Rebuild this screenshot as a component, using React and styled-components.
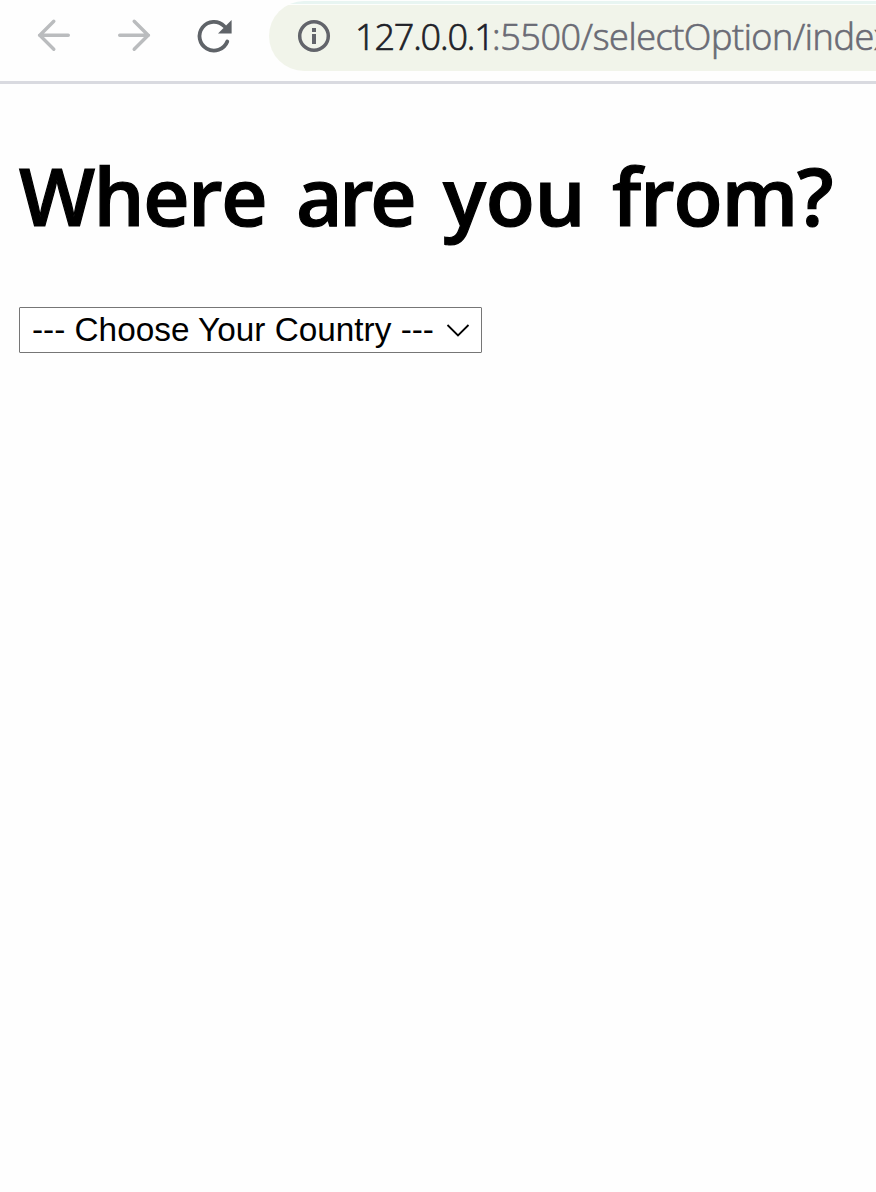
import React from "react";
import styled, { createGlobalStyle } from "styled-components";

const GlobalStyle = createGlobalStyle`
  html, body { margin: 0; background: #fefefe; overflow: hidden; }
  #root { height: 1192px; }
`;

const Toolbar = styled.header`
  display: flex;
  box-sizing: border-box;
  width: 876px;
  height: 84px;
  padding-top: 1px;
  border-bottom: 3px solid #d9dae0;
  overflow: hidden;
`;

const NavButtons = styled.nav`
  display: flex;
  flex: none;
  gap: 40px;
  padding: 15px 0 0 34px;
  width: 235px;
`;

const NavButton = styled.button`
  width: 40px;
  height: 40px;
  padding: 0;
  border: 0;
  background: none;
  color: ${(p) => (p.$active ? "#5f6368" : "#babcbe")};
  svg { display: block; }
`;

const AddressBar = styled.div`
  display: flex;
  flex: none;
  align-items: center;
  box-sizing: border-box;
  width: 700px;
  height: 70px;
  padding-left: 27px;
  border-radius: 35px 0 0 35px;
  background: linear-gradient(#e8f5f2 0 3px, #fdfefc 3px 4px, #f1f4ea 4px);
`;

const InfoIcon = styled.svg`
  flex: none;
  width: 36px;
  height: 36px;
  margin-right: 23px;
`;

const Url = styled.span`
  padding-top: 1px;
  font: 300 36px/50px "Open Sans", "Noto Sans", sans-serif;
  -webkit-text-stroke: 0.7px currentColor;
  color: #6a6b75;
  white-space: nowrap;
`;

const Host = styled.span`
  display: inline-block;
  width: 137px;
  color: #202128;
  letter-spacing: ${(p) => p.$tracking}px;
`;

const Path = styled.span`
  letter-spacing: ${(p) => p.$tracking}px;
`;

const Page = styled.main`
  padding: 56px 19px 0;
`;

const Heading = styled.h1`
  display: flex;
  margin: 0;
  height: 110px;
  font: 600 80.5px/110px "Open Sans", "Noto Sans", sans-serif;
  -webkit-text-stroke: ${(p) => p.$stroke}px currentColor;
  color: #000;
  white-space: pre;
`;

const Word = styled.span`
  flex: none;
  width: ${(p) => p.$width}px;
  letter-spacing: ${(p) => p.$tracking}px;
`;

const SelectBox = styled.div`
  display: flex;
  align-items: center;
  box-sizing: border-box;
  width: 463px;
  height: 46px;
  margin-top: 57px;
  padding-left: 12px;
  border: 1px solid #767676;
  border-radius: 1px;
  background: #fff;
  color: #000;
  font: 33.33px/38px "Liberation Sans", Arial, sans-serif;
  white-space: nowrap;
`;

const SelectLabel = styled.span`
  width: 414px;
`;

const words = [
  { text: "Where", width: 277, tracking: -1.5 },
  { text: "are", width: 147, tracking: -3.6 },
  { text: "you", width: 169, tracking: -0.3 },
  { text: "from?", width: 240, tracking: -1.2 },
];

export default function App() {
  return (
    <>
      <GlobalStyle />
      <Toolbar>
        <NavButtons>
          <NavButton aria-label="Back">
            <svg width="40" height="40" fill="none" stroke="currentColor" strokeWidth="3.4" strokeLinecap="round" strokeLinejoin="round">
              <path d="M34.3 19.3H5.5M19.8 5.3l-14 14 14 14" />
            </svg>
          </NavButton>
          <NavButton aria-label="Forward">
            <svg width="40" height="40" fill="none" stroke="currentColor" strokeWidth="3.4" strokeLinecap="round" strokeLinejoin="round">
              <path d="M5.7 19.3h28.8M20.2 5.3l14 14-14 14" />
            </svg>
          </NavButton>
          <NavButton $active aria-label="Reload">
            <svg width="40" height="40" fill="none" stroke="currentColor" strokeWidth="3.8" strokeLinecap="round">
              <path d="M33.3 25.5A14.4 14.4 0 1 1 30.3 10.2" />
              <path d="M37.6 4v13.5H24Z" fill="currentColor" stroke="none" />
            </svg>
          </NavButton>
        </NavButtons>
        <AddressBar>
          <InfoIcon viewBox="0 0 36 36">
            <circle cx="18" cy="18" r="14.3" fill="none" stroke="#62646a" strokeWidth="3.5" />
            <path d="M16 10h4v4h-4zM16 16h4v10h-4z" fill="#62646a" />
          </InfoIcon>
          <Url>
            <Host $tracking={-1.15}>127.0.0.1</Host>
            <Path $tracking={-0.4}>:5500/selectOption/index</Path>
          </Url>
        </AddressBar>
      </Toolbar>
      <Page>
        <Heading $stroke={1.2}>
          {words.map((w) => (
            <Word key={w.text} $width={w.width} $tracking={w.tracking}>{w.text + " "}</Word>
          ))}
        </Heading>
        <SelectBox role="combobox" aria-expanded="false">
          <SelectLabel>--- Choose Your Country ---</SelectLabel>
          <svg width="24" height="16" fill="none" stroke="#000" strokeWidth="1.8">
            <path d="M1.5 3l10.5 10.5L22.5 3" />
          </svg>
        </SelectBox>
      </Page>
    </>
  );
}
